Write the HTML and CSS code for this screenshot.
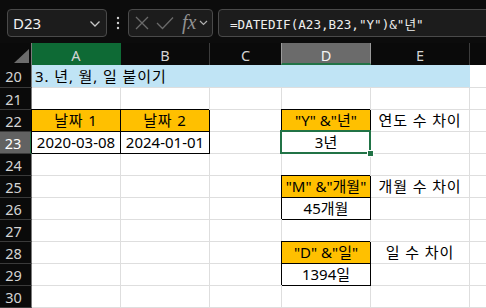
FILE: index.html
```html
<!DOCTYPE html>
<html lang="ko">
<head>
<meta charset="utf-8">
<link rel="stylesheet" href="styles.css">
</head>
<body>
<div class="toolbar">
  <div class="box namebox">
    <span class="ref">D23</span>
    <svg class="chev" width="12" height="8" viewBox="0 0 12 8"><path d="M1.5 1.5 L6 6 L10.5 1.5" fill="none" stroke="#c8c8c8" stroke-width="1.3"/></svg>
  </div>
  <div class="dots">
    <svg width="4" height="14" viewBox="0 0 4 14"><circle cx="2" cy="2" r="1.2" fill="#cfcfcf"/><circle cx="2" cy="7" r="1.2" fill="#cfcfcf"/><circle cx="2" cy="12" r="1.2" fill="#cfcfcf"/></svg>
  </div>
  <div class="box fbtns">
    <svg class="ic-x" width="14" height="14" viewBox="0 0 14 14"><path d="M1 1 L13 13 M13 1 L1 13" stroke="#6a6a6a" stroke-width="1.3" fill="none"/></svg>
    <svg class="ic-ok" width="18" height="14" viewBox="0 0 18 14"><path d="M1 7 L6.5 12.5 L17 1.5" stroke="#6a6a6a" stroke-width="1.3" fill="none"/></svg>
    <span class="fx">fx</span>
    <svg class="chev2" width="9" height="6" viewBox="0 0 9 6"><path d="M1 1 L4.5 4.5 L8 1" fill="none" stroke="#b0b0b0" stroke-width="1.2"/></svg>
  </div>
  <div class="box formula">=DATEDIF(A23,B23,"Y")&amp;"년"</div>
</div>

<div class="sheet">
  <div class="corner"><span class="tri"></span></div>
  <div class="ch ch-a">A</div>
  <div class="ch">B</div>
  <div class="ch">C</div>
  <div class="ch ch-sel">D</div>
  <div class="ch">E</div>
  <div class="ch ch-last"></div>

  <div class="rh">20</div>
  <div class="c title ko">3. 년, 월, 일 붙이기</div>
  <div class="c last"></div>

  <div class="rh">21</div>
  <div class="c"></div><div class="c"></div><div class="c"></div><div class="c"></div><div class="c"></div><div class="c last"></div>

  <div class="rh">22</div>
  <div class="c bx hd ko">날짜 1</div>
  <div class="c bx hd ko">날짜 2</div>
  <div class="c"></div>
  <div class="c bx hd">"Y" &amp;"년"</div>
  <div class="c mid ko">연도 수 차이</div>
  <div class="c last"></div>

  <div class="rh rh-sel">23</div>
  <div class="c bx mid">2020-03-08</div>
  <div class="c bx mid">2024-01-01</div>
  <div class="c"></div>
  <div class="c bx mid sel">3년</div>
  <div class="c"></div>
  <div class="c last"></div>

  <div class="rh">24</div>
  <div class="c"></div><div class="c"></div><div class="c"></div><div class="c"></div><div class="c"></div><div class="c last"></div>

  <div class="rh">25</div>
  <div class="c"></div><div class="c"></div><div class="c"></div>
  <div class="c bx hd">"M" &amp;"개월"</div>
  <div class="c mid ko">개월 수 차이</div>
  <div class="c last"></div>

  <div class="rh">26</div>
  <div class="c"></div><div class="c"></div><div class="c"></div>
  <div class="c bx mid">45개월</div>
  <div class="c"></div>
  <div class="c last"></div>

  <div class="rh">27</div>
  <div class="c"></div><div class="c"></div><div class="c"></div><div class="c"></div><div class="c"></div><div class="c last"></div>

  <div class="rh">28</div>
  <div class="c"></div><div class="c"></div><div class="c"></div>
  <div class="c bx hd">"D" &amp;"일"</div>
  <div class="c mid ko">일 수 차이</div>
  <div class="c last"></div>

  <div class="rh">29</div>
  <div class="c"></div><div class="c"></div><div class="c"></div>
  <div class="c bx mid">1394일</div>
  <div class="c"></div>
  <div class="c last"></div>

  <div class="rh">30</div>
  <div class="c"></div><div class="c"></div><div class="c"></div><div class="c"></div><div class="c"></div><div class="c last"></div>
</div>
</body>
</html>
```

FILE: styles.css
```css
html, body {
  margin: 0;
  padding: 0;
  background: #0a0a0a;
  overflow: hidden;
}
body {
  width: 486px;
  height: 308px;
  font-family: "Noto Sans", "Noto Sans CJK KR", sans-serif;
}

/* ---------- toolbar ---------- */
.toolbar {
  height: 43px;
  box-sizing: border-box;
  padding-top: 9px;
  display: flex;
  align-items: flex-start;
  background: #0c0c0c;
}
.box {
  height: 28px;
  box-sizing: border-box;
  border: 1px solid #4a4a4a;
  border-radius: 4px;
  background: #1c1c1c;
  display: flex;
  align-items: center;
}
.namebox {
  margin-left: 7px;
  width: 100px;
  padding: 0 5px 0 5px;
  justify-content: space-between;
}
.ref {
  color: #f2f2f2;
  font-size: 15px;
  line-height: 1;
}
.chev { margin-top: 1px; }
.dots {
  width: 21px;
  height: 28px;
  display: flex;
  align-items: center;
  justify-content: center;
}
.fbtns {
  width: 85px;
  padding-left: 6px;
}
.ic-x { margin-right: 7px; }
.ic-ok { margin-right: 8px; }
.fx {
  font-family: "Liberation Serif", "DejaVu Serif", serif;
  font-style: italic;
  font-size: 20px;
  line-height: 1;
  color: #909090;
  margin-top: -3px;
  margin-right: 3px;
}
.formula {
  margin-left: 5px;
  flex: 1;
  margin-right: -12px;
  padding-left: 11px;
  color: #eeeeee;
  font-family: "DejaVu Sans Mono", "Noto Sans CJK KR", monospace;
  font-size: 12.6px;
  white-space: nowrap;
}

/* ---------- sheet ---------- */
.sheet {
  display: grid;
  grid-template-columns: 32px 89px 89px 72px 89px 99px 1fr;
  grid-template-rows: 22px 23px repeat(10, 22px);
  background: #ffffff;
}
.corner {
  background: #0a0a0a;
  border-right: 1px solid #7a7a7a;
  position: relative;
}
.tri {
  position: absolute;
  right: 2px;
  bottom: 2px;
  width: 0;
  height: 0;
  border-left: 15px solid transparent;
  border-bottom: 14px solid #6c6c6c;
}
.ch {
  background: #0a0a0a;
  color: #d4d4d4;
  font-size: 14.5px;
  display: flex;
  align-items: center;
  justify-content: center;
  border-right: 1px solid #3c3c3c;
  padding-top: 1px;
}
.ch-a {
  background: #0e6a35;
  border-right-color: #0e6a35;
}
.ch-sel {
  background: #6b6b6b;
  color: #f4f4f4;
  border-left: 1px solid #9a9a9a;
  border-right: 1px solid #9a9a9a;
  border-bottom: 2px solid #217346;
  margin-left: -1px;
  padding-top: 3px;
}
.ch-last { border-right: none; }

.rh {
  background: #0a0a0a;
  color: #d4d4d4;
  font-size: 14.5px;
  border-right: 1px solid #7a7a7a;
  border-bottom: 1px solid #3a3a3a;
  display: flex;
  align-items: center;
  justify-content: center;
  padding-right: 4px;
}
.rh-sel {
  background: #626262;
  color: #ffffff;
  border-right: 2px solid #217346;
}

.c {
  background: #ffffff;
  border-right: 1px solid #dedede;
  border-bottom: 1px solid #dedede;
  font-size: 15px;
  color: #000;
  display: flex;
  align-items: center;
  white-space: nowrap;
  line-height: 1;
  min-width: 0;
}
.c.last { border-right: none; }
.ko { letter-spacing: 0.9px; }
.title {
  grid-column: span 5;
  background: #c0e4f5;
  border-right-color: #c0e4f5;
  border-bottom-color: #dedede;
  padding-left: 3px;
}
.mid { justify-content: center; }
.hd {
  justify-content: center;
  background: #ffc000;
}
.bx {
  border-right: 1px solid #000;
  border-bottom: 1px solid #000;
  box-shadow: -1px -1px 0 0 #000;
}
.sel { position: relative; }
.sel::after {
  content: "";
  position: absolute;
  left: -2px;
  top: -2px;
  right: -1px;
  bottom: -1px;
  border: 2px solid #217346;
}
.sel::before {
  content: "";
  position: absolute;
  right: -4px;
  bottom: -4px;
  width: 7px;
  height: 7px;
  box-sizing: border-box;
  background: #217346;
  border: 1px solid #ffffff;
  z-index: 1;
}
```
